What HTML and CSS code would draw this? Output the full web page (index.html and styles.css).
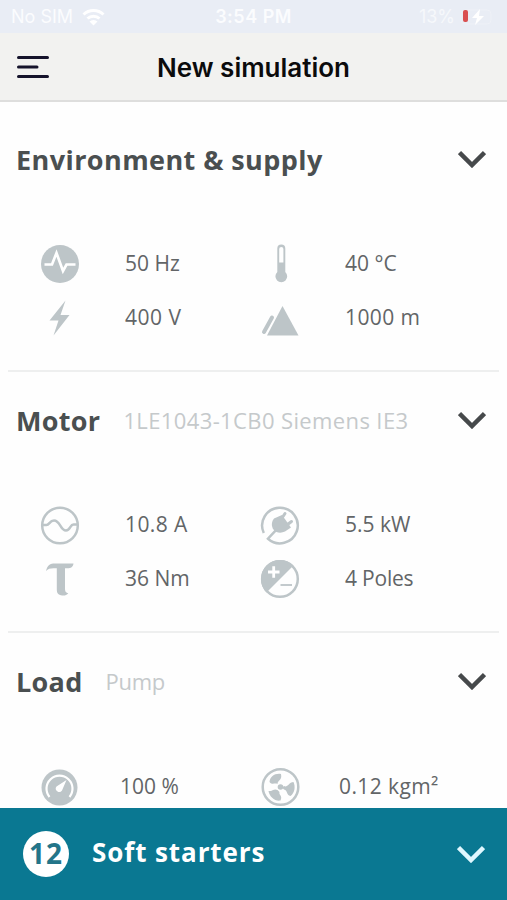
FILE: index.html
```
<!DOCTYPE html>
<html lang="en">

<head>
    <meta charset="utf-8">
    <title>New simulation</title>
    <link rel="stylesheet" href="styles.css">
</head>

<body>

    <div class="app">
        <div class="status-bar">
            <div class="carrier">
                <span class="sim">No SIM</span>
                <svg width="23" height="18" viewBox="0 0 23 18">
                    <path d="M1.500 6.500a14.500 14.500 0 0 1 20 0M5.500 10.500a8.800 8.800 0 0 1 12 0" fill="none" stroke="#fff" stroke-width="3" />
                    <path d="M11.500 17.500l-4-4a5.800 5.800 0 0 1 8 0z" fill="#fff" />
                </svg>
            </div>
            <span class="time">3:54 PM</span>
            <div class="battery">
                <span class="percent">13%</span>
                <svg width="36" height="16" viewBox="0 0 36 16">
                    <rect x="1" y="1" width="30" height="14" rx="4" fill="none" stroke="#eef1f7" />
                    <rect x="3" y="1" width="5" height="12" rx="2" fill="#d94f50" />
                    <path d="M20 0l-8 9h5l-2 7 9-9h-5z" fill="#fff" />
                </svg>
            </div>
        </div>

        <header class="header">
            <svg class="menu" width="32" height="24" viewBox="0 0 32 24">
                <path d="M1.500 2.500h29M1.500 12h18.500M1.500 21.500h29" stroke="#15132b" stroke-width="3" stroke-linecap="round" />
            </svg>
            <h1 class="page-title">New simulation</h1>
        </header>

        <main class="content">
            <section class="section">
                <div class="section-head">
                    <h2 class="environment">Environment &amp; supply</h2>
                    <svg class="chevron" width="28" height="18" viewBox="0 0 28 18">
                        <path d="M1.500 2.500L14 15 26.500 2.500" />
                    </svg>
                </div>
                <div class="values">
                    <svg class="icon" viewBox="0 0 40 40">
                        <circle class="fill" cx="20" cy="20" r="19" />
                        <path class="light" d="M4.500 20.500H12l4.500-11.500L23 27l3.500-6.500h9" stroke-width="2.700" />
                    </svg>
                    <span>50 Hz</span>
                    <svg class="icon" viewBox="0 0 40 40">
                        <path class="fill" fill-rule="evenodd" d="M17.300 4.500a4 4 0 0 1 8 0V28a5.900 5.900 0 1 1-8 0zM19.200 5v13.500h4.200V5a2.100 2.100 0 0 0-4.200 0z" />
                    </svg>
                    <span>40 °C</span>
                    <svg class="icon" viewBox="0 0 40 40">
                        <path class="fill" d="M25.500 2.500L9.500 22.500h9L13.500 37.500l16-20.500h-9z" />
                    </svg>
                    <span class="volt">400 V</span>
                    <svg class="icon" viewBox="0 0 40 40">
                        <path class="fill" d="M22.500 8L38.500 37.500H7z" />
                        <path class="line thick" d="M12 19.500L4 34" />
                    </svg>
                    <span class="wide">1000 m</span>
                </div>
            </section>

            <section class="section">
                <div class="section-head">
                    <h2 class="motor">Motor</h2>
                    <span class="detail">1LE1043-1CB0 Siemens IE3</span>
                    <svg class="chevron" width="28" height="18" viewBox="0 0 28 18">
                        <path d="M1.500 2.500L14 15 26.500 2.500" />
                    </svg>
                </div>
                <div class="values">
                    <svg class="icon" viewBox="0 0 40 40">
                        <circle class="line" cx="20" cy="20.500" r="17.800" />
                        <path class="line" d="M2 20h4.500c3 0 3-4.500 7.500-4.500 6.500 0 6 10 12 10 4.500 0 4-6 7.500-6H38" />
                    </svg>
                    <span class="wide">10.8 A</span>
                    <svg class="icon" viewBox="0 0 40 40">
                        <path class="line" d="M3.800 28A17.800 17.800 0 1 1 8 33.700l8-8.500" />
                        <path class="fill" d="M14 13.500l8-3.500 9 12.500-6 4c-4 2-9 1.500-11.500-2-2.500-3.500-2-8 .5-11z" />
                        <path class="line plug" d="M22 13l3-4.500M27.500 19.500l4-3" />
                    </svg>
                    <span>5.5 kW</span>
                    <svg class="icon" viewBox="0 0 40 40">
                        <path class="fill" d="M6 12C7.500 6 10 4.500 15 4.500h18.500c-.5 3.500-2.500 4.800-6 4.800h-2.500v20c0 3.500 1 4.500 3.300 5-1.500 2-4 2.500-6 2.200-4.500-.5-5.500-2.500-5.500-6.200v-21h-3.300C10 9.300 8 10 6 12z" />
                    </svg>
                    <span>36 Nm</span>
                    <svg class="icon" viewBox="0 0 40 40">
                        <circle class="line" cx="20" cy="20" r="17.800" />
                        <path class="fill" d="M33.500 6.500A19 19 0 1 0 6.500 33.500z" />
                        <path class="light" d="M8 13h11.500M13.700 7.200v11.600" stroke-width="2.800" />
                        <path class="line thin" d="M20.500 26H32" />
                    </svg>
                    <span class="poles">4 Poles</span>
                </div>
            </section>

            <section class="section">
                <div class="section-head">
                    <h2 class="load">Load</h2>
                    <span class="detail pump">Pump</span>
                    <svg class="chevron" width="28" height="18" viewBox="0 0 28 18">
                        <path d="M1.500 2.500L14 15 26.500 2.500" />
                    </svg>
                </div>
                <div class="values load-values">
                    <svg class="icon" viewBox="0 0 40 40">
                        <circle class="fill" cx="19.500" cy="20.500" r="18" />
                        <path class="light" d="M9.500 30a13 13 0 1 1 20 0" stroke-width="2.200" />
                        <path d="M26.500 13L16.500 19.500a3.200 3.200 0 1 0 5.500 4z" fill="#fff" />
                    </svg>
                    <span>100 %</span>
                    <svg class="icon" viewBox="0 0 40 40">
                        <circle class="line" cx="20.500" cy="20" r="17.800" />
                        <circle class="fill" cx="20.500" cy="20" r="2.800" />
                        <path class="fill" d="M17.500 17c0-4 5-3.500 3.500-10-6-1-11 2.500-11.500 8 3 3.500 5 .5 8 2zM24 19c3.500 2 4.500-3.500 9.500-4 2 4 1.500 11-3 14-4.500-.5-2.500-6-6.500-6.500-1.500-1-1.500-2.500 0-3.500zM17.500 23c-3.500-2-5 1.500-9 1 1 6 6.500 10.500 12 9.500 2.500-5-2-5.500-1-8.500z" />
                    </svg>
                    <span class="wide">0.12 kgm²</span>
                </div>
            </section>
        </main>

        <footer class="footer">
            <span class="count">12</span>
            <span class="footer-title">Soft starters</span>
            <svg class="chevron" width="28" height="18" viewBox="0 0 28 18">
                <path d="M1.500 2.500L14 15 26.500 2.500" />
            </svg>
        </footer>
    </div>

</body>

</html>
```

FILE: styles.css
```
* {
    box-sizing: border-box;
}

body {
    margin: 0;
    font-family: 'Open Sans', 'Noto Sans', sans-serif;
    background-color: #fefefe;
    color: #4a4f50;
}

.app {
    display: flex;
    flex-direction: column;
    height: 900px;
    overflow: hidden;
}

/* status bar */
.status-bar {
    display: grid;
    grid-template-columns: 1fr auto 1fr;
    align-items: center;
    height: 33px;
    padding: 0 11px;
    background-color: #e9edf5;
    color: #fbfcfe;
    font-family: Inter, sans-serif;
    font-size: 18px;
    line-height: 33px;
}

.carrier,
.battery {
    display: flex;
    align-items: center;
    gap: 9px;
}

.battery {
    justify-content: flex-end;
    gap: 5px;
}

.percent {
    color: #f6f8fb;
}

.time {
    font-weight: 600;
    letter-spacing: 0.5px;
}

/* header */
.header {
    display: grid;
    grid-template-columns: 32px 1fr 32px;
    align-items: center;
    flex-shrink: 0;
    height: 69px;
    padding: 0 17px;
    background-color: #f2f2f0;
    border-bottom: 2px solid #dededd;
}

.page-title {
    margin: 0;
    padding-top: 1px;
    text-align: center;
    font-family: Inter, sans-serif;
    font-size: 26px;
    font-weight: 600;
    color: #0b0b0c;
}

/* sections */
.content {
    flex: 1;
    min-height: 0;
    overflow: hidden;
    padding: 9px 8px 0;
}

.section {
    height: 261px;
    border-bottom: 2px solid #eeefef;
}

.section-head {
    display: flex;
    align-items: center;
    height: 100px;
    padding: 0 13px 4px 8px;
}

.section-head h2 {
    margin: 0;
    font-size: 27px;
    font-weight: 700;
    letter-spacing: 0.3px;
    white-space: nowrap;
}

.section-head .environment {
    letter-spacing: 0.42px;
}

.detail {
    margin-left: 23px;
    font-size: 22px;
    letter-spacing: 0.38px;
    color: #c5c9cb;
    white-space: nowrap;
}

.pump {
    letter-spacing: -0.3px;
}

.chevron {
    margin-left: auto;
    fill: none;
    stroke: #46494b;
    stroke-width: 4.5;
}

.values {
    display: grid;
    grid-template-columns: 85px 135px 85px 1fr;
    grid-auto-rows: 54px;
    align-items: center;
    padding: 26px 0 0 32px;
    font-size: 21px;
    line-height: 52px;
    color: #626567;
    white-space: nowrap;
}

.values span {
    padding-bottom: 2px;
}

.values .wide {
    letter-spacing: 0.4px;
}

.values .volt {
    letter-spacing: 0.5px;
}

.values .poles {
    letter-spacing: -0.2px;
}

.load-values {
    grid-template-columns: 80px 140px 79px 1fr;
    padding-top: 27px;
}

.icon {
    width: 40px;
    height: 40px;
}

.fill {
    fill: #bdc5c8;
}

.line {
    fill: none;
    stroke: #bdc5c8;
    stroke-width: 2.5;
}

.thick {
    stroke-width: 4;
    stroke-linecap: round;
}

.thin {
    stroke-width: 1.8;
}

.plug {
    stroke-width: 3;
    stroke-linecap: round;
}

.light {
    fill: none;
    stroke: #fff;
}

/* bottom bar */
.footer {
    display: flex;
    align-items: center;
    flex-shrink: 0;
    height: 92px;
    padding: 0 22px 0 23px;
    background-color: #0a7892;
    color: #fff;
}

.count {
    width: 46px;
    height: 46px;
    border-radius: 50%;
    background-color: #fff;
    color: #237589;
    font-size: 28px;
    font-weight: 700;
    letter-spacing: 1px;
    line-height: 44px;
    text-align: center;
}

.footer-title {
    margin-left: 23px;
    padding-bottom: 4px;
    font-size: 26px;
    font-weight: 700;
    letter-spacing: 0.9px;
}

.footer .chevron {
    stroke: #e0f8ff;
}
```
